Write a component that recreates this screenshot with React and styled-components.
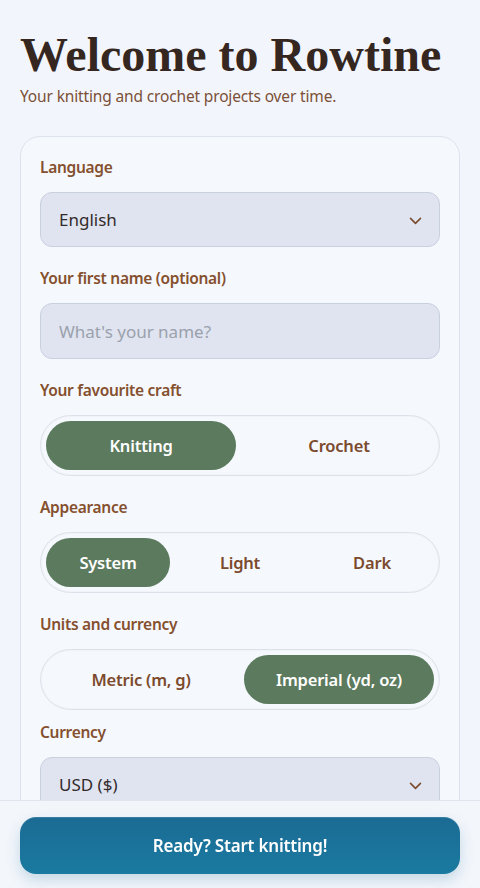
import React, { useState } from "react";
import styled, { createGlobalStyle } from "styled-components";

const GlobalStyle = createGlobalStyle`
  html, body {
    margin: 0;
    padding: 0;
    background: #f2f6fc;
  }
  body {
    font-family: "Noto Sans", "Open Sans", sans-serif;
    -webkit-font-smoothing: antialiased;
  }
  * {
    box-sizing: border-box;
  }
`;

const languages = ["English", "Deutsch", "Français", "Español"];
const currencies = ["USD ($)", "EUR (€)", "GBP (£)"];

export default function App() {
  const [craft, setCraft] = useState("knitting");
  const [appearance, setAppearance] = useState("system");
  const [units, setUnits] = useState("imperial");
  const [name, setName] = useState("");

  return (
    <Page>
      <GlobalStyle />
      <Header>
        <Title>Welcome to Rowtine</Title>
        <Subtitle>Your knitting and crochet projects over time.</Subtitle>
      </Header>

      <Card>
        <Field>
          <Label>Language</Label>
          <SelectWrap>
            <Select defaultValue="English">
              {languages.map((l) => (
                <option key={l}>{l}</option>
              ))}
            </Select>
            <Chevron />
          </SelectWrap>
        </Field>

        <Field>
          <Label>Your first name (optional)</Label>
          <Input
            placeholder="What's your name?"
            value={name}
            onChange={(e) => setName(e.target.value)}
          />
        </Field>

        <Field>
          <Label>Your favourite craft</Label>
          <Segmented $count={2}>
            <Segment $active={craft === "knitting"} onClick={() => setCraft("knitting")}>
              Knitting
            </Segment>
            <Segment $active={craft === "crochet"} onClick={() => setCraft("crochet")}>
              Crochet
            </Segment>
          </Segmented>
        </Field>

        <Field>
          <Label>Appearance</Label>
          <Segmented $count={3}>
            {["System", "Light", "Dark"].map((item) => (
              <Segment
                key={item}
                $active={appearance === item.toLowerCase()}
                onClick={() => setAppearance(item.toLowerCase())}
              >
                {item}
              </Segment>
            ))}
          </Segmented>
        </Field>

        {/* units + currency sit closer together */}
        <Group>
          <Field>
            <Label>Units and currency</Label>
            <Segmented $count={2}>
              <Segment $active={units === "metric"} onClick={() => setUnits("metric")}>
                Metric (m, g)
              </Segment>
              <Segment $active={units === "imperial"} onClick={() => setUnits("imperial")}>
                Imperial (yd, oz)
              </Segment>
            </Segmented>
          </Field>
          <Field>
            <Label>Currency</Label>
            <SelectWrap>
              <Select defaultValue="USD ($)">
                {currencies.map((c) => (
                  <option key={c}>{c}</option>
                ))}
              </Select>
              <Chevron />
            </SelectWrap>
          </Field>
        </Group>
      </Card>

      <Footer>
        <StartButton>Ready? Start knitting!</StartButton>
      </Footer>
    </Page>
  );
}

function Chevron() {
  return (
    <ChevronIcon viewBox="0 0 24 24" fill="none">
      <path
        d="M5 9l7 7 7-7"
        stroke="currentColor"
        strokeWidth="2.2"
        strokeLinecap="round"
        strokeLinejoin="round"
      />
    </ChevronIcon>
  );
}

const Page = styled.div`
  min-height: 100vh;
  padding: 28px 20px 120px;
  background: #f2f6fc;
`;

const Header = styled.div`
  margin-bottom: 29px;
`;

const Title = styled.h1`
  margin: 0;
  font-family: "Liberation Serif", "Times New Roman", serif;
  font-weight: 700;
  font-size: 48px;
  line-height: 54px;
  white-space: nowrap;
  color: #35271f;
`;

const Subtitle = styled.p`
  margin: 3px 0 0;
  font-size: 15.5px;
  line-height: 22px;
  letter-spacing: -0.15px;
  color: #7c5038;
`;

const Card = styled.div`
  display: flex;
  flex-direction: column;
  gap: 20px;
  padding: 19px 19px 24px;
  border: 1px solid #dde3ec;
  border-radius: 20px;
  background: #f5f8fd;
`;

const Group = styled.div`
  display: flex;
  flex-direction: column;
  gap: 11px;
`;

const Field = styled.div`
  display: flex;
  flex-direction: column;
  gap: 14px;
`;

const Label = styled.label`
  font-size: 15.5px;
  line-height: 22px;
  font-weight: 600;
  letter-spacing: -0.3px;
  color: #85502e;
`;

const SelectWrap = styled.div`
  position: relative;
`;

const Select = styled.select`
  appearance: none;
  width: 100%;
  height: 55px;
  padding: 0 44px 0 18px;
  border: 1px solid #c9d0de;
  border-radius: 12px;
  background: #dfe4f0;
  font-family: inherit;
  font-size: 17px;
  color: #332b2b;
  outline: none;
`;

const ChevronIcon = styled.svg`
  position: absolute;
  right: 16px;
  top: 50%;
  width: 17px;
  height: 17px;
  margin-top: -8px;
  color: #7a4a2c;
  pointer-events: none;
`;

const Input = styled.input`
  width: 100%;
  height: 56px;
  padding: 0 18px;
  border: 1px solid #c9d0de;
  border-radius: 12px;
  background: #dfe4f0;
  font-family: inherit;
  font-size: 17px;
  color: #332b2b;
  outline: none;

  &::placeholder {
    color: #9ba1ad;
  }
`;

const Segmented = styled.div`
  display: grid;
  grid-template-columns: repeat(${(p) => p.$count}, 1fr);
  gap: 8px;
  padding: 5px;
  border: 1px solid #dde2ea;
  border-radius: 999px;
  background: #f5f8fd;
  box-shadow: inset 0 0 0 1px #f0f3f8;
`;

const Segment = styled.button`
  height: 49px;
  border: none;
  border-radius: 999px;
  background: ${(p) => (p.$active ? "#5c7a5d" : "transparent")};
  color: ${(p) => (p.$active ? "#ffffff" : "#7c4a2c")};
  font-family: inherit;
  font-size: 16.5px;
  font-weight: 600;
  letter-spacing: -0.2px;
  cursor: pointer;
`;

const Footer = styled.div`
  position: fixed;
  left: 0;
  right: 0;
  bottom: 0;
  height: 88px;
  padding: 16px 20px 15px;
  border-top: 1px solid #e1e6ee;
  background: rgba(243, 246, 251, 0.97);
`;

const StartButton = styled.button`
  width: 100%;
  height: 57px;
  border: none;
  border-radius: 16px;
  background: linear-gradient(180deg, #1b6b94 0%, #1a7aa0 100%);
  box-shadow: 0 6px 14px rgba(26, 110, 150, 0.22), inset 0 1px 0 rgba(255, 255, 255, 0.12);
  color: #ffffff;
  font-family: inherit;
  font-size: 17px;
  font-weight: 600;
  letter-spacing: -0.2px;
  cursor: pointer;
`;
